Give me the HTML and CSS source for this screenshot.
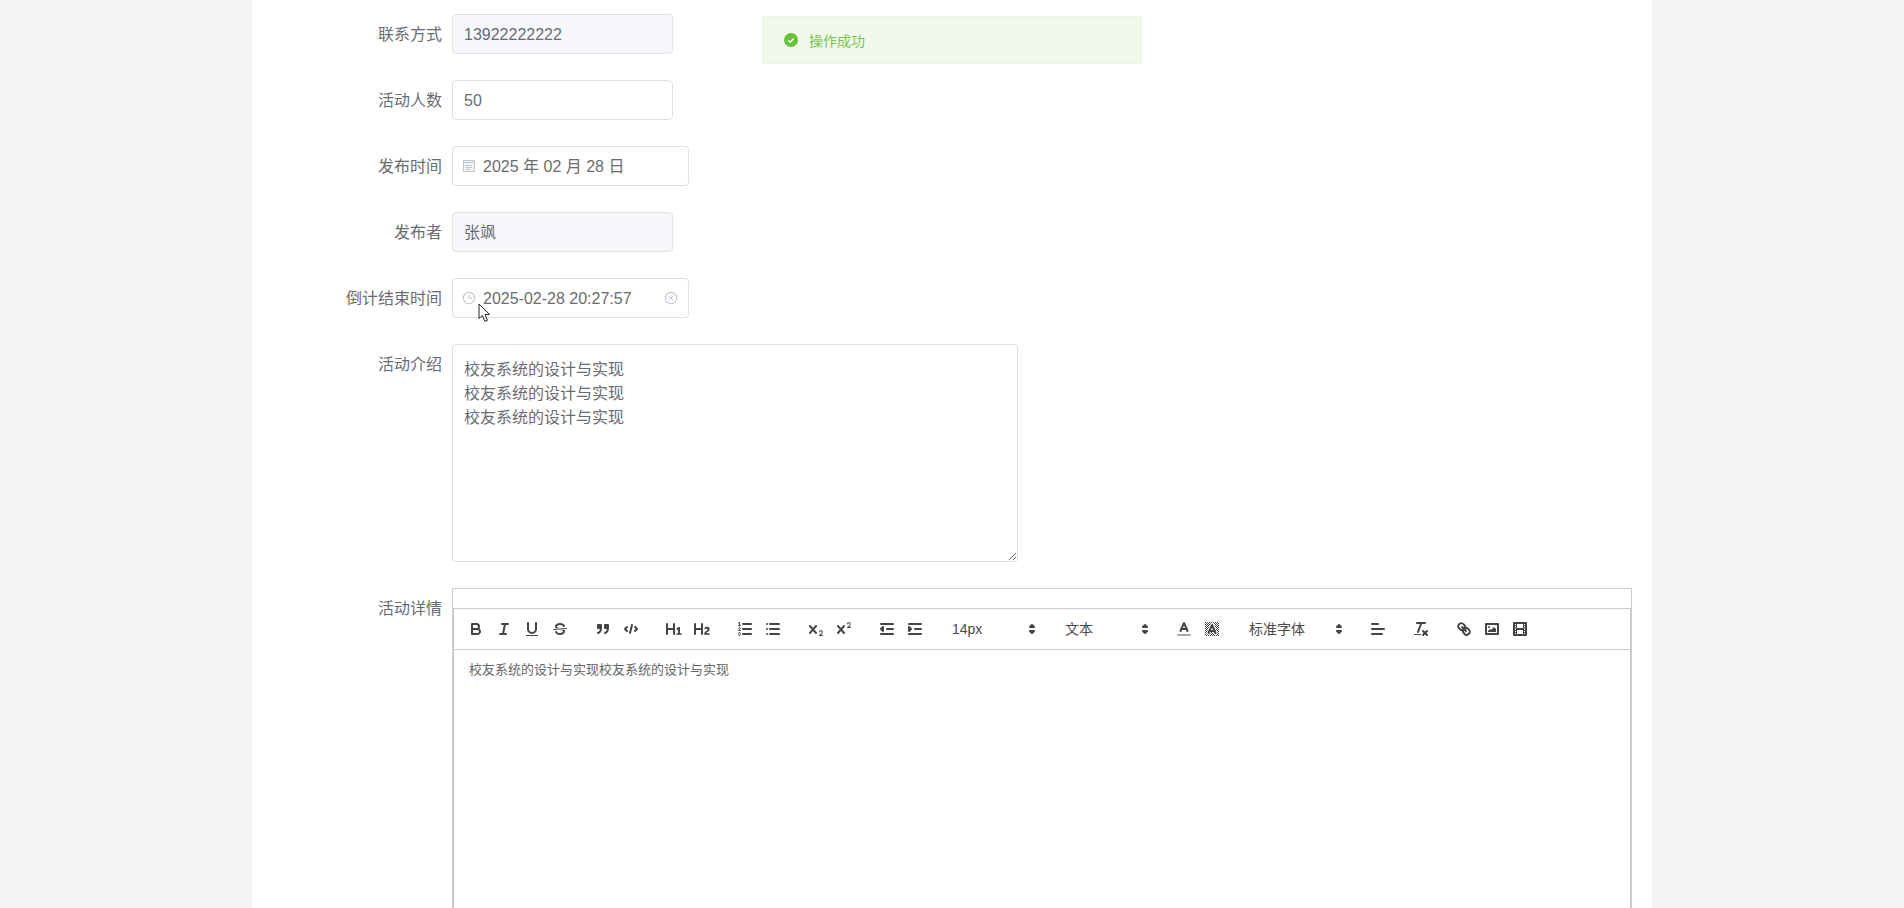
FILE: index.html
```html
<!DOCTYPE html>
<html lang="zh-CN">
<head>
<meta charset="utf-8">
<title>活动编辑</title>
<link rel="stylesheet" href="styles.css">
</head>
<body>
<main class="page">
  <form class="form">
    <div class="row">
      <label class="label">联系方式</label>
      <div class="input disabled">13922222222</div>
    </div>
    <div class="row">
      <label class="label">活动人数</label>
      <div class="input">50</div>
    </div>
    <div class="row">
      <label class="label">发布时间</label>
      <div class="input picker">
        <svg class="prefix" viewBox="0 0 14 14"><path d="M1.5 1.5h11v11h-11z" fill="#f3f4f6" stroke="#c0c4cc"/><path d="M1.5 3.5h11M4 6.5h6M4 8.5h6M4 10.5h4" stroke="#c0c4cc" fill="none"/></svg>
        <span>2025 年 02 月 28 日</span>
      </div>
    </div>
    <div class="row">
      <label class="label">发布者</label>
      <div class="input disabled">张飒</div>
    </div>
    <div class="row">
      <label class="label">倒计结束时间</label>
      <div class="input picker">
        <svg class="prefix" viewBox="0 0 14 14"><circle cx="7" cy="7" r="5.7" fill="none" stroke="#c0c4cc" stroke-width="1.1"/><path d="M7 3.5V7.3H10" fill="none" stroke="#c0c4cc" stroke-width="1"/></svg>
        <span class="grow">2025-02-28 20:27:57</span>
        <svg class="suffix" viewBox="0 0 14 14"><circle cx="7" cy="7" r="5.7" fill="none" stroke="#c0c4cc" stroke-width="1.1"/><path d="M5 5l4 4M9 5l-4 4" fill="none" stroke="#c0c4cc" stroke-width="1"/></svg>
      </div>
    </div>
    <div class="row">
      <label class="label">活动介绍</label>
      <textarea class="textarea" readonly>校友系统的设计与实现
校友系统的设计与实现
校友系统的设计与实现</textarea>
    </div>
    <div class="row">
      <label class="label">活动详情</label>
      <div class="editor">
        <div class="toolbar">
          <div class="fmt">
            <span class="btn"><svg viewBox="0 0 18 18"><path class="st" d="M5,4H9.5A2.5,2.5,0,0,1,12,6.5v0A2.5,2.5,0,0,1,9.5,9H5A0,0,0,0,1,5,9V4A0,0,0,0,1,5,4Z"/><path class="st" d="M5,9h5.5A2.5,2.5,0,0,1,13,11.5v0A2.5,2.5,0,0,1,10.5,14H5a0,0,0,0,1,0,0V9A0,0,0,0,1,5,9Z"/></svg></span>
            <span class="btn"><svg viewBox="0 0 18 18"><line class="st" x1="7" x2="13" y1="4" y2="4"/><line class="st" x1="5" x2="11" y1="14" y2="14"/><line class="st" x1="8" x2="10" y1="14" y2="4"/></svg></span>
            <span class="btn"><svg viewBox="0 0 18 18"><path class="st" d="M5,3V9a4.012,4.012,0,0,0,4,4H9a4.012,4.012,0,0,0,4-4V3"/><rect class="fl" height="1" rx=".5" ry=".5" width="12" x="3" y="15"/></svg></span>
            <span class="btn"><svg viewBox="0 0 18 18"><line class="st thin" x1="15.5" x2="2.5" y1="8.5" y2="9.5"/><path class="fl" d="M9.007,8C6.542,7.791,6,7.519,6,6.5,6,5.792,7.283,5,9,5c1.571,0,2.765.679,2.969,1.309a1,1,0,0,0,1.9-.617C13.356,4.106,11.354,3,9,3,6.2,3,4,4.538,4,6.5a3.2,3.2,0,0,0,.5,1.843Z"/><path class="fl" d="M8.984,10C11.457,10.208,12,10.479,12,11.5c0,.708-1.283,1.5-3,1.5-1.571,0-2.765-.679-2.969-1.309a1,1,0,1,0-1.9.617C4.644,13.894,6.646,15,9,15c2.8,0,5-1.538,5-3.5a3.2,3.2,0,0,0-.5-1.843Z"/></svg></span>
          </div>
          <div class="fmt">
            <span class="btn"><svg viewBox="0 0 18 18"><rect class="fl st" height="3" width="3" x="4" y="5"/><rect class="fl st" height="3" width="3" x="11" y="5"/><path class="st" d="M7,8c0,4.031-3,5-3,5"/><path class="st" d="M14,8c0,4.031-3,5-3,5"/></svg></span>
            <span class="btn"><svg viewBox="0 0 18 18"><polyline class="st" points="5 7 3 9 5 11"/><polyline class="st" points="13 7 15 9 13 11"/><line class="st" x1="10" x2="8" y1="5" y2="13"/></svg></span>
          </div>
          <div class="fmt">
            <span class="btn"><svg viewBox="0 0 18 18"><path class="fl" d="M10,4V14a1,1,0,0,1-2,0V10H3v4a1,1,0,0,1-2,0V4A1,1,0,0,1,3,4V8H8V4a1,1,0,0,1,2,0Zm6.06787,9.209H14.98975V7.59863a.54085.54085,0,0,0-.605-.60547h-.62744a1.01119,1.01119,0,0,0-.748.29688L11.645,8.56641a.5435.5435,0,0,0-.022.8584l.28613.30762a.53861.53861,0,0,0,.84717.0332l.09912-.08789a1.2137,1.2137,0,0,0,.2417-.35254h.02246s-.01123.30859-.01123.60547V13.209H12.041a.54085.54085,0,0,0-.605.60547v.43945a.54085.54085,0,0,0,.605.60547h4.02686a.54085.54085,0,0,0,.605-.60547v-.43945A.54085.54085,0,0,0,16.06787,13.209Z"/></svg></span>
            <span class="btn"><svg viewBox="0 0 18 18"><path class="fl" d="M16.73975,13.81445v.43945a.54085.54085,0,0,1-.605.60547H11.855a.58392.58392,0,0,1-.64893-.60547V14.0127c0-2.90527,3.39941-3.42187,3.39941-4.55469a.77675.77675,0,0,0-.84717-.78125,1.17684,1.17684,0,0,0-.83594.38477c-.2749.26367-.561.374-.85791.13184l-.4292-.34082c-.30811-.24219-.38525-.51758-.1543-.81445a2.97155,2.97155,0,0,1,2.45361-1.17676,2.45393,2.45393,0,0,1,2.68408,2.40918c0,2.45312-3.1792,2.92676-3.27832,3.93848h2.79443A.54085.54085,0,0,1,16.73975,13.81445ZM9,3A.99974.99974,0,0,0,8,4V8H3V4A1,1,0,0,0,1,4V14a1,1,0,0,0,2,0V10H8v4a1,1,0,0,0,2,0V4A.99974.99974,0,0,0,9,3Z"/></svg></span>
          </div>
          <div class="fmt">
            <span class="btn"><svg viewBox="0 0 18 18"><line class="st" x1="7" x2="15" y1="4" y2="4"/><line class="st" x1="7" x2="15" y1="9" y2="9"/><line class="st" x1="7" x2="15" y1="14" y2="14"/><line class="st thin" x1="2.5" x2="4.5" y1="5.5" y2="5.5"/><path class="fl" d="M3.5,6A0.5,0.5,0,0,1,3,5.5V3.085l-0.276.138A0.5,0.5,0,0,1,2.053,3c-0.124-.247-0.023-0.324.224-0.447l1-.5A0.5,0.5,0,0,1,4,2.5v3A0.5,0.5,0,0,1,3.5,6Z"/><path class="st thin" d="M4.5,10.5h-2c0-.234,1.85-1.076,1.85-2.234A0.959,0.959,0,0,0,2.5,8.156"/><path class="st thin" d="M2.5,14.846a0.959,0.959,0,0,0,1.85-.109A0.7,0.7,0,0,0,3.75,14a0.688,0.688,0,0,0,.6-0.736,0.959,0.959,0,0,0-1.85-.109"/></svg></span>
            <span class="btn"><svg viewBox="0 0 18 18"><line class="st" x1="6" x2="15" y1="4" y2="4"/><line class="st" x1="6" x2="15" y1="9" y2="9"/><line class="st" x1="6" x2="15" y1="14" y2="14"/><line class="st" x1="3" x2="3" y1="4" y2="4"/><line class="st" x1="3" x2="3" y1="9" y2="9"/><line class="st" x1="3" x2="3" y1="14" y2="14"/></svg></span>
          </div>
          <div class="fmt">
            <span class="btn"><svg viewBox="0 0 18 18"><path class="fl" d="M15.5,15H13.861a3.858,3.858,0,0,0,1.914-2.975,1.8,1.8,0,0,0-1.6-1.751A1.921,1.921,0,0,0,12.021,11.7a0.50013,0.50013,0,1,0,.957.291h0a0.914,0.914,0,0,1,1.053-.725,0.81,0.81,0,0,1,.744.762c0,1.076-1.16971,1.86982-1.93971,2.43082A1.45639,1.45639,0,0,0,12,15.5a0.5,0.5,0,0,0,.5.5h3A0.5,0.5,0,0,0,15.5,15Z"/><path class="fl" d="M9.65,5.241a1,1,0,0,0-1.409.108L6,7.964,3.759,5.349A1,1,0,0,0,2.192,6.59178Q2.21541,6.6213,2.241,6.649L4.684,9.5,2.241,12.35A1,1,0,0,0,3.71,13.70722q0.02557-.02768.049-0.05722L6,11.036,8.241,13.65a1,1,0,1,0,1.567-1.24277Q9.78459,12.3777,9.759,12.35L7.316,9.5,9.759,6.651A1,1,0,0,0,9.65,5.241Z"/></svg></span>
            <span class="btn"><svg viewBox="0 0 18 18"><path class="fl" d="M15.5,7H13.861a4.015,4.015,0,0,0,1.914-2.975,1.8,1.8,0,0,0-1.6-1.751A1.922,1.922,0,0,0,12.021,3.7a0.5,0.5,0,1,0,.957.291,0.917,0.917,0,0,1,1.053-.725,0.81,0.81,0,0,1,.744.762c0,1.077-1.164,1.925-1.934,2.486A1.423,1.423,0,0,0,12,7.5a0.5,0.5,0,0,0,.5.5h3A0.5,0.5,0,0,0,15.5,7Z"/><path class="fl" d="M9.651,5.241a1,1,0,0,0-1.41.108L6,7.964,3.759,5.349a1,1,0,1,0-1.519,1.3L4.683,9.5,2.241,12.35a1,1,0,1,0,1.519,1.3L6,11.036l2.241,2.615a1,1,0,0,0,1.519-1.3L7.317,9.5,9.759,6.651A1,1,0,0,0,9.651,5.241Z"/></svg></span>
          </div>
          <div class="fmt">
            <span class="btn"><svg viewBox="0 0 18 18"><line class="st" x1="3" x2="15" y1="14" y2="14"/><line class="st" x1="3" x2="15" y1="4" y2="4"/><line class="st" x1="9" x2="15" y1="9" y2="9"/><polyline class="fl st" points="5 7 5 11 3 9 5 7"/></svg></span>
            <span class="btn"><svg viewBox="0 0 18 18"><line class="st" x1="3" x2="15" y1="14" y2="14"/><line class="st" x1="3" x2="15" y1="4" y2="4"/><line class="st" x1="9" x2="15" y1="9" y2="9"/><polyline class="fl st" points="3 7 3 11 5 9 3 7"/></svg></span>
          </div>
          <div class="fmt">
            <div class="select">14px<svg viewBox="0 0 18 18"><polygon class="st arrow" points="7 11 9 13 11 11 7 11"/><polygon class="st arrow" points="7 7 9 5 11 7 7 7"/></svg></div>
          </div>
          <div class="fmt">
            <div class="select">文本<svg viewBox="0 0 18 18"><polygon class="st arrow" points="7 11 9 13 11 11 7 11"/><polygon class="st arrow" points="7 7 9 5 11 7 7 7"/></svg></div>
          </div>
          <div class="fmt">
            <span class="btn"><svg viewBox="0 0 18 18"><line class="st under" x1="3" x2="15" y1="15" y2="15"/><polyline class="st" points="5.5 11 9 3 12.5 11"/><line class="st" x1="11.63" x2="6.38" y1="9" y2="9"/></svg></span>
            <span class="btn"><svg viewBox="0 0 18 18"><defs><pattern id="checker" width="2" height="2" patternUnits="userSpaceOnUse"><rect width="1" height="1" fill="#444"/><rect x="1" y="1" width="1" height="1" fill="#444"/></pattern></defs><rect x="2" y="2" width="14" height="14" fill="url(#checker)"/><polyline class="st halo" points="5.5 13 9 5 12.5 13"/><polyline class="st" points="5.5 13 9 5 12.5 13"/><line class="st" x1="11.63" x2="6.38" y1="11" y2="11"/></svg></span>
          </div>
          <div class="fmt">
            <div class="select wide">标准字体<svg viewBox="0 0 18 18"><polygon class="st arrow" points="7 11 9 13 11 11 7 11"/><polygon class="st arrow" points="7 7 9 5 11 7 7 7"/></svg></div>
          </div>
          <div class="fmt">
            <span class="btn"><svg viewBox="0 0 18 18"><line class="st" x1="3" x2="15" y1="9" y2="9"/><line class="st" x1="3" x2="13" y1="14" y2="14"/><line class="st" x1="3" x2="9" y1="4" y2="4"/></svg></span>
          </div>
          <div class="fmt">
            <span class="btn"><svg viewBox="0 0 18 18"><line class="st" x1="5" x2="13" y1="3" y2="3"/><line class="st" x1="6" x2="9.35" y1="12" y2="3"/><line class="st" x1="11" x2="15" y1="11" y2="15"/><line class="st" x1="15" x2="11" y1="11" y2="15"/><rect class="fl" height="1" rx=".5" ry=".5" width="7" x="2" y="14"/></svg></span>
          </div>
          <div class="fmt">
            <span class="btn"><svg viewBox="0 0 18 18"><line class="st" x1="7" x2="11" y1="7" y2="11"/><path class="st" d="M8.9,4.577a3.476,3.476,0,0,1,.36,4.679A3.476,3.476,0,0,1,4.577,8.9C3.185,7.5,2.035,6.4,4.217,4.217S7.5,3.185,8.9,4.577Z"/><path class="st" d="M13.423,9.1a3.476,3.476,0,0,0-4.679-.36,3.476,3.476,0,0,0,.36,4.679c1.392,1.392,2.5,2.542,4.679.36S14.815,10.5,13.423,9.1Z"/></svg></span>
            <span class="btn"><svg viewBox="0 0 18 18"><rect class="st" height="10" width="12" x="3" y="4"/><circle class="fl" cx="6" cy="7" r="1"/><polyline class="fl" points="5 12 5 11 7 9 8 10 11 7 13 9 13 12 5 12"/></svg></span>
            <span class="btn"><svg viewBox="0 0 18 18"><rect class="st" height="12" width="12" x="3" y="3"/><rect class="fl" height="12" width="1" x="5" y="3"/><rect class="fl" height="12" width="1" x="12" y="3"/><rect class="fl" height="2" width="8" x="5" y="8"/><rect class="fl" height="1" width="3" x="3" y="5"/><rect class="fl" height="1" width="3" x="3" y="7"/><rect class="fl" height="1" width="3" x="3" y="10"/><rect class="fl" height="1" width="3" x="3" y="12"/><rect class="fl" height="1" width="3" x="12" y="5"/><rect class="fl" height="1" width="3" x="12" y="7"/><rect class="fl" height="1" width="3" x="12" y="10"/><rect class="fl" height="1" width="3" x="12" y="12"/></svg></span>
          </div>
        </div>
        <div class="content">校友系统的设计与实现校友系统的设计与实现</div>
      </div>
    </div>
  </form>
</main>

<div class="toast" role="alert">
  <svg class="toast-icon" viewBox="0 0 14 14"><circle cx="7" cy="7" r="7" fill="#67c23a"/><path d="M4.2 7.2l2 2 3.6-3.8" fill="none" stroke="#fff" stroke-width="1.3"/></svg>
  <span>操作成功</span>
</div>

<svg class="cursor" viewBox="0 0 13 20"><path d="M1 1V15.5L4.4 12.4L6.8 18.4L9.4 17.3L7 11.4H11.6Z" fill="#fff" stroke="#222" stroke-width="1"/></svg>
</body>
</html>
```

FILE: styles.css
```css
* { box-sizing: border-box; }

html, body {
  margin: 0;
  height: 908px;
  overflow: hidden;
  background: #f5f5f5;
}

body {
  font-family: "Liberation Sans", "Noto Sans CJK SC", sans-serif;
  color: #6a6c70;
  font-size: 16px;
}

.page {
  width: 1400px;
  height: 908px;
  margin: 0 auto;
  padding-top: 14px;
  background: #fff;
  overflow: hidden;
}

.row {
  display: flex;
  align-items: flex-start;
  margin-bottom: 26px;
}

.label {
  flex: none;
  width: 200px;
  height: 40px;
  padding-top: 1px;
  padding-right: 10px;
  line-height: 39px;
  text-align: right;
}

.input {
  display: flex;
  align-items: center;
  width: 221px;
  height: 40px;
  padding: 0 11px;
  border: 1px solid #dcdfe6;
  border-radius: 4px;
  line-height: 37px;
  background: #fff;
}

.input.disabled {
  background: #f5f7fa;
  border-color: #dfe2e9;
}

.input.picker {
  width: 237px;
  padding-left: 9px;
  padding-right: 10px;
}

.prefix {
  flex: none;
  width: 14px;
  height: 14px;
  margin-right: 7px;
}

.grow { flex: 1; }

.suffix {
  flex: none;
  width: 14px;
  height: 14px;
}

.textarea {
  display: block;
  width: 566px;
  height: 218px;
  padding: 13px 11px 11px;
  border: 1px solid #dcdfe6;
  border-radius: 4px;
  font: inherit;
  line-height: 24px;
  color: inherit;
  background: #fff;
  outline: none;
  resize: vertical;
}

.editor {
  flex: none;
  width: 1180px;
  height: 600px;
  padding-top: 19px;
  border: 1px solid #ccc;
  color: #444;
}

.toolbar {
  display: flex;
  align-items: center;
  height: 42px;
  padding: 8px;
  border: 1px solid #ccc;
}

.fmt {
  display: flex;
  margin-right: 15px;
}

.btn {
  display: block;
  width: 28px;
  height: 24px;
  padding: 3px 5px;
}

.btn svg {
  display: block;
  width: 18px;
  height: 18px;
}

.st {
  fill: none;
  stroke: #444;
  stroke-width: 2;
  stroke-linecap: round;
  stroke-linejoin: round;
}

.st.thin { stroke-width: 1; }
.st.under { stroke: #aaa; }
.st.halo { stroke: #fff; stroke-width: 4; }
.st.arrow { fill: #444; }

.fl, .st.fl { fill: #444; }

.select {
  position: relative;
  width: 98px;
  height: 24px;
  padding-left: 8px;
  font-size: 14px;
  line-height: 24px;
  color: #4a4a4a;
}

.select.wide { width: 108px; }

.select svg {
  position: absolute;
  top: 3px;
  right: 1px;
  width: 18px;
  height: 18px;
}

.content {
  height: 100%;
  padding: 11px 15px;
  border: 1px solid #ccc;
  border-top: 0;
  font-size: 13px;
  line-height: 18.46px;
  color: #666;
}

.toast {
  position: absolute;
  top: 16px;
  left: 762px;
  display: flex;
  align-items: center;
  width: 380px;
  height: 48px;
  padding-left: 21px;
  padding-bottom: 1px;
  border: 1px solid #e9f5e2;
  background: #f0f9eb;
  color: #78c552;
  font-size: 14px;
}

.toast-icon {
  width: 14px;
  height: 14px;
  margin-right: 11px;
}

.cursor {
  position: absolute;
  top: 303px;
  left: 478px;
  width: 13px;
  height: 20px;
}
```
